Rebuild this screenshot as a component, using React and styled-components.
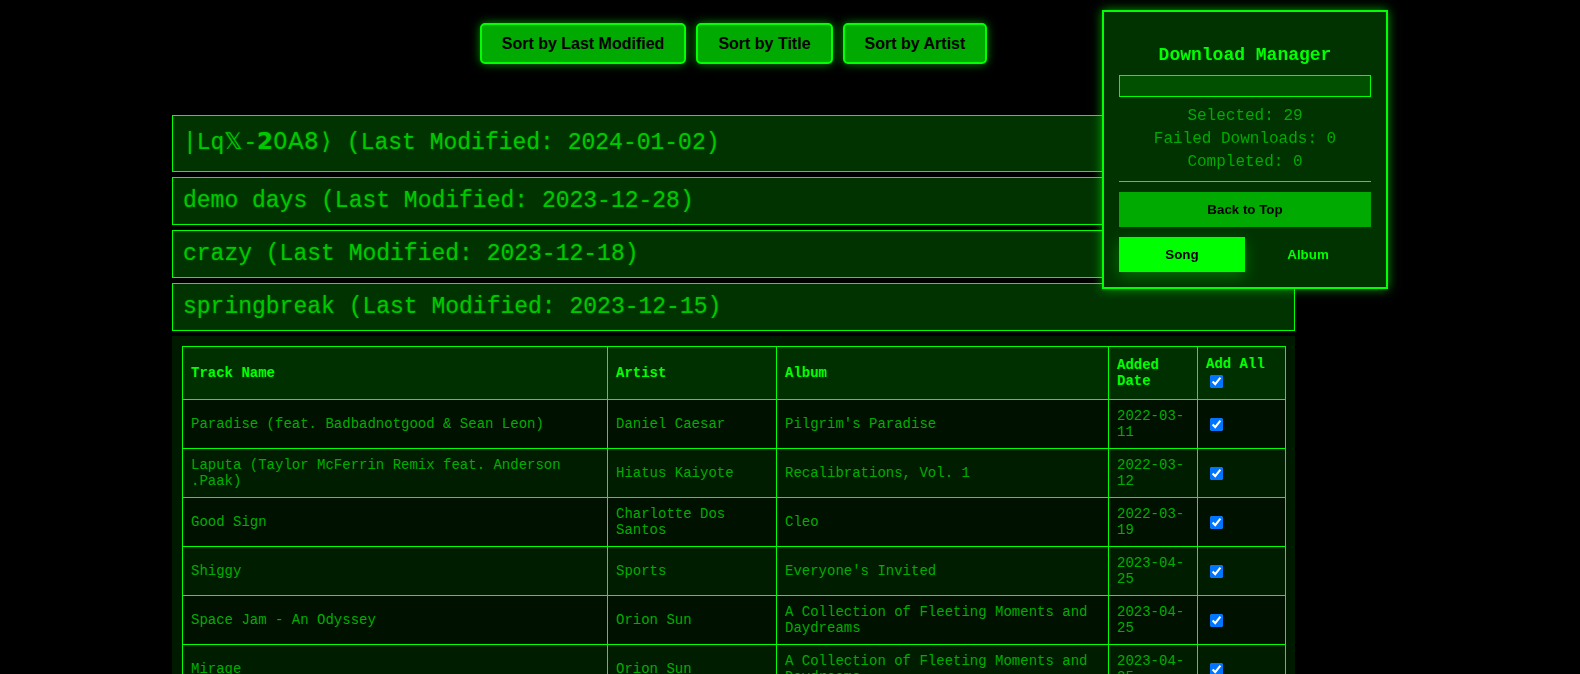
import React from "react";
import styled, { createGlobalStyle } from "styled-components";

const GlobalStyle = createGlobalStyle`
  html, body {
    margin: 0;
    padding: 0;
    background: #000;
    font-family: "Liberation Mono", "DejaVu Sans Mono", monospace;
  }
`;

const Main = styled.main`
  width: 1123px;
  margin-left: 172px;
`;

const SortBar = styled.div`
  display: flex;
  justify-content: center;
  gap: 10px;
  padding-top: 23px;
  margin-bottom: 51px;
`;

const SortButton = styled.button`
  font-family: "Liberation Sans", Arial, sans-serif;
  font-weight: bold;
  font-size: 16px;
  line-height: 17px;
  padding: 10px 20px;
  background: #00aa00;
  color: #000;
  border: 2px solid #00ff00;
  border-radius: 5px;
  box-shadow: 0 0 10px rgba(0, 255, 0, 0.55);
  cursor: pointer;
`;

const Playlist = styled.div`
  margin-bottom: 5px;
  padding: 10px;
  background: #003300;
  border: 1px solid #00ff00;
  color: #00c800;
  font-size: 23px;
  line-height: ${(p) => (p.$tall ? "35px" : "normal")};
  text-shadow: 0 0 2px rgba(0, 255, 0, 0.35);
  white-space: nowrap;
`;

const TableWrap = styled.div`
  background: #001a00;
  padding: 10px;
`;

const Table = styled.table`
  width: 100%;
  border-collapse: collapse;
  table-layout: fixed;
`;

const Th = styled.th`
  padding: 8.5px 8px;
  border: 1px solid #00ff00;
  background: #003000;
  color: #00ff00;
  font-size: 14px;
  font-weight: bold;
  text-align: left;
  vertical-align: middle;
`;

const Row = styled.tr`
  background: ${(p) => (p.$alt ? "#001d00" : "#001100")};
`;

const Td = styled.td`
  padding: 8px;
  border: 1px solid #00ff00;
  color: #00ad00;
  font-size: 14px;
  text-align: left;
  vertical-align: middle;
`;

const Check = styled.input`
  margin: 3px 3px 3px 4px;
  vertical-align: middle;
`;

const Panel = styled.aside`
  position: fixed;
  top: 10px;
  right: 192px;
  width: 252px;
  padding: 15px;
  background: #003300;
  border: 2px solid #00ff00;
  box-shadow: 0 0 10px rgba(0, 255, 0, 0.6);
  text-align: center;
`;

const PanelTitle = styled.h3`
  margin: 18px 0 10px;
  font-size: 18px;
  font-weight: bold;
  color: #00ff00;
`;

const ProgressBar = styled.div`
  height: 20px;
  border: 1px solid #00ff00;
  background: #005000;
  margin-bottom: 10px;
`;

const Stat = styled.p`
  margin: 5px 0;
  font-size: 16px;
  line-height: 18px;
  color: #00aa00;
`;

const Rule = styled.hr`
  margin: 10px 0;
  border: none;
  border-top: 1px solid #00ff00;
  height: 0;
`;

const PanelButton = styled.button`
  display: block;
  width: 100%;
  padding: 10px;
  border: none;
  background: #00aa00;
  color: #000;
  font-family: "Liberation Sans", Arial, sans-serif;
  font-weight: bold;
  font-size: 13.33px;
  line-height: 15px;
`;

const Toggle = styled.div`
  display: flex;
  margin-top: 10px;
`;

const ToggleButton = styled.button`
  flex: 1;
  padding: 10px;
  border: none;
  font-family: "Liberation Sans", Arial, sans-serif;
  font-weight: bold;
  font-size: 13.33px;
  line-height: 15px;
  background: ${(p) => (p.$active ? "#00ff00" : "transparent")};
  color: ${(p) => (p.$active ? "#000" : "#00ff00")};
  box-shadow: ${(p) => (p.$active ? "0 5px 15px rgba(0, 255, 0, 0.3)" : "none")};
`;

const playlists = [
  { name: "|Lq𝕏-𝟮𝟢𝖠𝟪⟩", date: "2024-01-02", tall: true },
  { name: "demo days", date: "2023-12-28" },
  { name: "crazy", date: "2023-12-18" },
  { name: "springbreak", date: "2023-12-15" },
];

const tracks = [
  ["Paradise (feat. Badbadnotgood & Sean Leon)", "Daniel Caesar", "Pilgrim's Paradise", "2022-03-11"],
  ["Laputa (Taylor McFerrin Remix feat. Anderson .Paak)", "Hiatus Kaiyote", "Recalibrations, Vol. 1", "2022-03-12"],
  ["Good Sign", "Charlotte Dos Santos", "Cleo", "2022-03-19"],
  ["Shiggy", "Sports", "Everyone's Invited", "2023-04-25"],
  ["Space Jam - An Odyssey", "Orion Sun", "A Collection of Fleeting Moments and Daydreams", "2023-04-25"],
  ["Mirage", "Orion Sun", "A Collection of Fleeting Moments and Daydreams", "2023-04-25"],
  ["Lightning", "Orion Sun", "Hold Space for Me", "2023-04-26"],
  ["Coffee", "Sylvan Esso", "Sylvan Esso", "2023-05-02"],
];

export default function App() {
  return (
    <>
      <GlobalStyle />
      <Main>
        <SortBar>
          <SortButton>Sort by Last Modified</SortButton>
          <SortButton>Sort by Title</SortButton>
          <SortButton>Sort by Artist</SortButton>
        </SortBar>
        {playlists.map((p) => (
          <Playlist key={p.name} $tall={p.tall}>
            {p.name} (Last Modified: {p.date})
          </Playlist>
        ))}
        <TableWrap>
          <Table>
            <colgroup>
              <col style={{ width: 425 }} />
              <col style={{ width: 169 }} />
              <col style={{ width: 332 }} />
              <col style={{ width: 89 }} />
              <col style={{ width: 88 }} />
            </colgroup>
            <thead>
              <tr>
                <Th>Track Name</Th>
                <Th>Artist</Th>
                <Th>Album</Th>
                <Th>Added Date</Th>
                <Th>
                  Add All <Check type="checkbox" defaultChecked />
                </Th>
              </tr>
            </thead>
            <tbody>
              {tracks.map((t, i) => (
                <Row key={t[0]} $alt={i % 2 === 1}>
                  <Td>{t[0]}</Td>
                  <Td>{t[1]}</Td>
                  <Td>{t[2]}</Td>
                  <Td>{t[3]}</Td>
                  <Td>
                    <Check type="checkbox" defaultChecked />
                  </Td>
                </Row>
              ))}
            </tbody>
          </Table>
        </TableWrap>
      </Main>
      <Panel>
        <PanelTitle>Download Manager</PanelTitle>
        <ProgressBar />
        <Stat>Selected: 29</Stat>
        <Stat>Failed Downloads: 0</Stat>
        <Stat>Completed: 0</Stat>
        <Rule />
        <PanelButton>Back to Top</PanelButton>
        <Toggle>
          <ToggleButton $active>Song</ToggleButton>
          <ToggleButton>Album</ToggleButton>
        </Toggle>
      </Panel>
    </>
  );
}
